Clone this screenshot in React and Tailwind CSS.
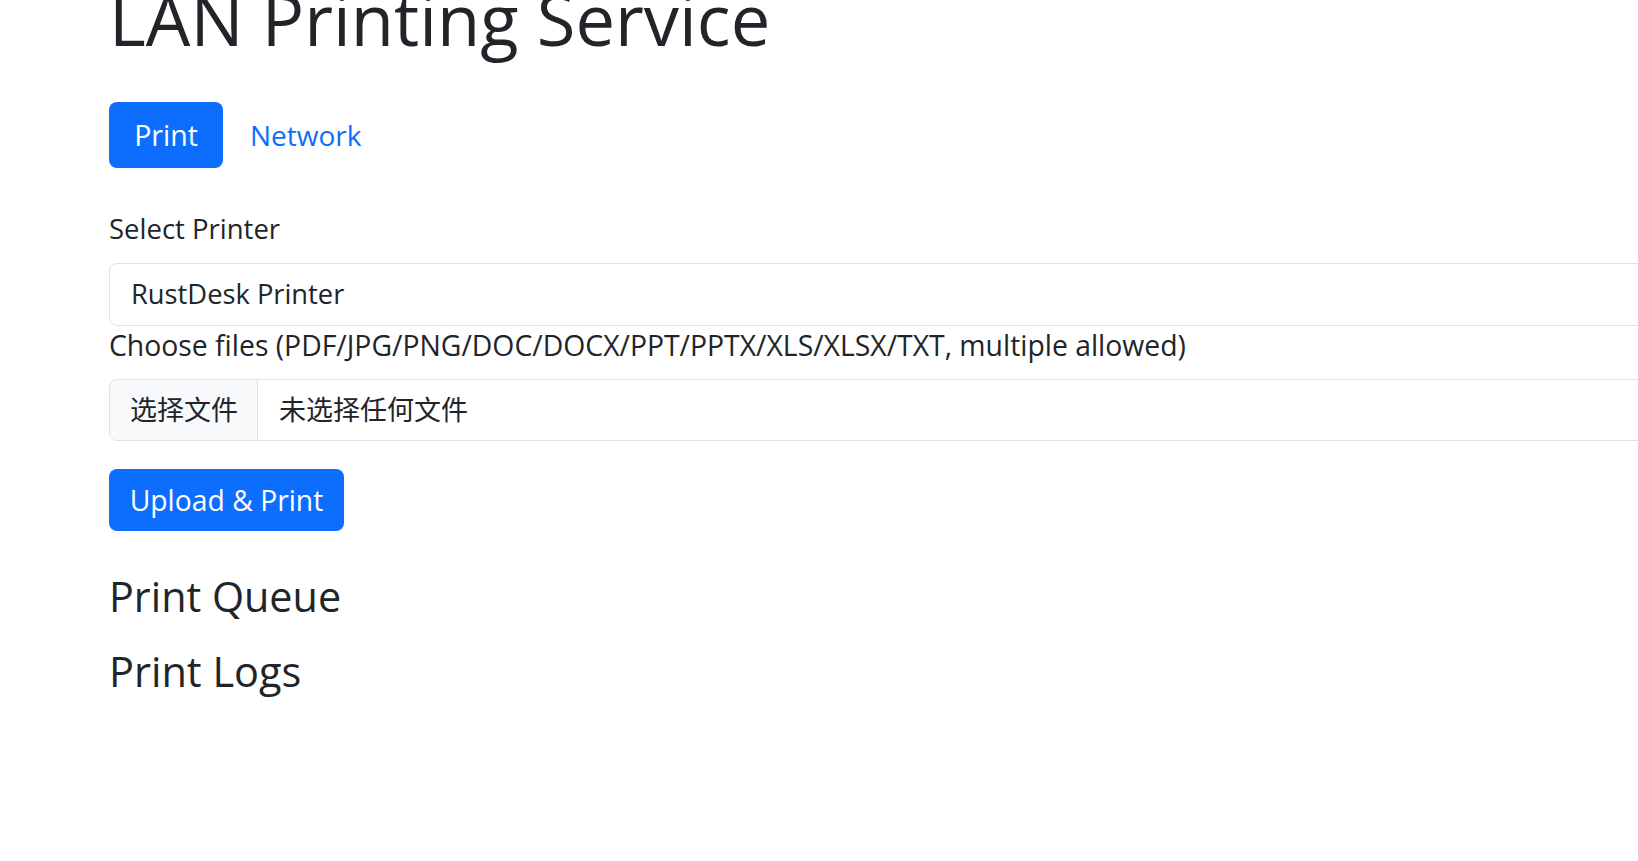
export default function App() {
  const font = { fontFamily: '"Open Sans", "Noto Sans CJK SC", sans-serif' };
  return (
    <div className="w-full h-[861px] overflow-hidden bg-white text-[#212529]" style={font}>
      <div className="pl-[109px] w-[1750px] flex flex-col items-start">
        <h1 className="text-[70.5px] leading-[80px] mt-[-21px] font-normal whitespace-nowrap">LAN Printing Service</h1>

        <nav className="flex items-center mt-[43px]">
          <a className="h-[66px] w-[114px] rounded-[8px] bg-[#0d6efd] text-white text-[28.5px] flex items-center justify-center">Print</a>
          <a className="ml-[27px] text-[28px] text-[#0d6efd]">Network</a>
        </nav>

        <label className="mt-[41px] text-[27.5px] leading-[40px] mb-[14px]">Select Printer</label>
        <div className="w-full h-[63px] border border-[#dee2e6] rounded-[8px] flex items-center pl-[21px] text-[27.3px]">
          RustDesk Printer
        </div>

        <label className="mt-[-1px] text-[28.35px] leading-[40px] mb-[14px] whitespace-nowrap">
          Choose files (PDF/JPG/PNG/DOC/DOCX/PPT/PPTX/XLS/XLSX/TXT, multiple allowed)
        </label>
        <div className="w-full h-[62px] border border-[#dee2e6] rounded-[8px] flex items-stretch overflow-hidden text-[27px]">
          <div className="w-[148px] bg-[#f8f9fa] border-r border-[#dee2e6] flex items-center pl-[20px]">选择文件</div>
          <div className="flex items-center pl-[21px]">未选择任何文件</div>
        </div>

        <button className="mt-[28px] h-[62px] w-[235px] rounded-[8px] bg-[#0d6efd] text-white text-[28.3px] flex items-center justify-center">
          Upload &amp; Print
        </button>

        <h4 className="mt-[41px] text-[41.3px] leading-[48px] font-normal">Print Queue</h4>
        <h4 className="mt-[27px] text-[41.5px] leading-[48px] font-normal">Print Logs</h4>
      </div>
    </div>
  );
}
